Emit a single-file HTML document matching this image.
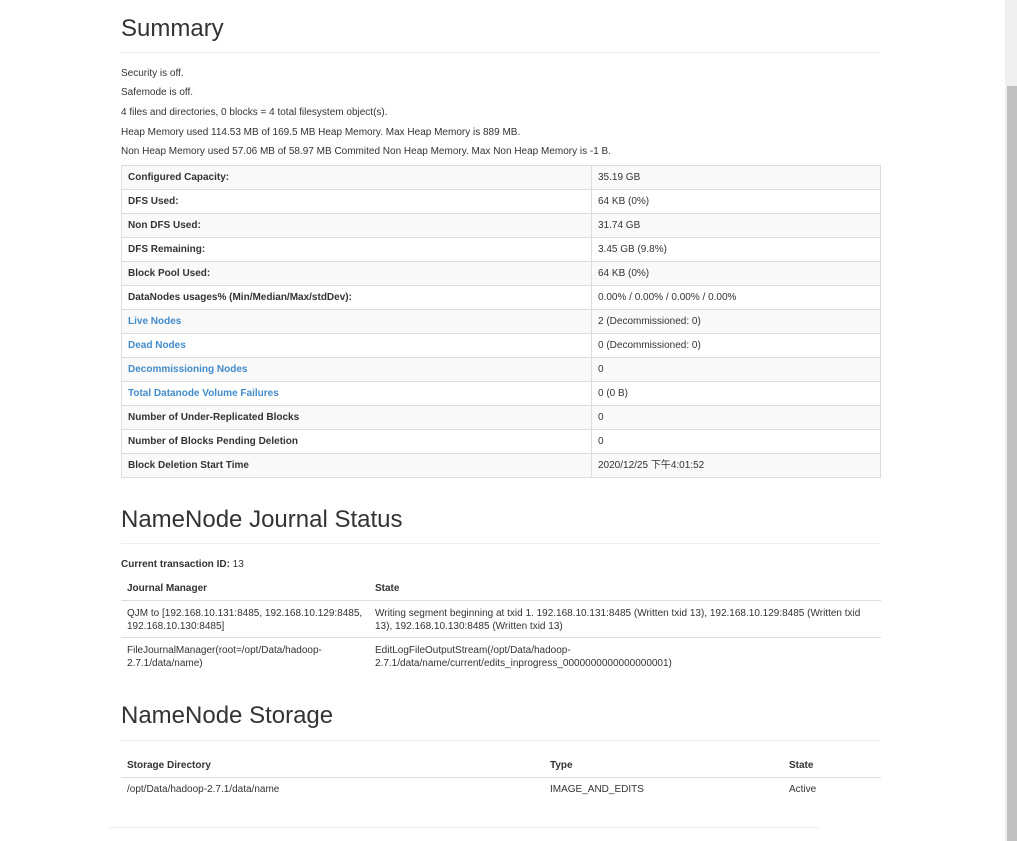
<!DOCTYPE html>
<html><head><meta charset="utf-8"><style>
*{margin:0;padding:0;box-sizing:border-box}
body{width:1017px;height:841px;overflow:hidden;background:#fff;font-family:"Liberation Sans","Noto Sans CJK SC",sans-serif;color:#333;position:relative}
.a{position:absolute;white-space:nowrap}
h1{position:absolute;left:121px;font-weight:normal;font-size:24px;color:#333;line-height:30px}
.hr{position:absolute;left:121px;width:759px;height:1px;background:#eee}
.t{font-size:10px;line-height:12px}
table.s{position:absolute;left:121px;top:165px;width:760px;border-collapse:collapse;font-size:10px;table-layout:fixed}
table.s td{border:1px solid #ddd;height:24px;padding:1px 6px 0;vertical-align:middle;line-height:12px;overflow:hidden}
table.s tr:nth-child(odd) td{background:#f9f9f9}
table.s td:first-child{font-weight:bold;width:470px}
a{color:#428bca;text-decoration:none}
.line{position:absolute;height:1px;background:#ddd}
</style></head><body>
<h1 style="top:14px">Summary</h1>
<div class="hr" style="top:52px"></div>
<div class="a t" style="left:121px;top:68px">Security is off.</div>
<div class="a t" style="left:121px;top:87px">Safemode is off.</div>
<div class="a t" style="left:121px;top:107px">4 files and directories, 0 blocks = 4 total filesystem object(s).</div>
<div class="a t" style="left:121px;top:127px">Heap Memory used 114.53 MB of 169.5 MB Heap Memory. Max Heap Memory is 889 MB.</div>
<div class="a t" style="left:121px;top:146px">Non Heap Memory used 57.06 MB of 58.97 MB Commited Non Heap Memory. Max Non Heap Memory is -1 B.</div>
<table class="s">
<tr><td>Configured Capacity:</td><td>35.19 GB</td></tr>
<tr><td>DFS Used:</td><td>64 KB (0%)</td></tr>
<tr><td>Non DFS Used:</td><td>31.74 GB</td></tr>
<tr><td>DFS Remaining:</td><td>3.45 GB (9.8%)</td></tr>
<tr><td>Block Pool Used:</td><td>64 KB (0%)</td></tr>
<tr><td>DataNodes usages% (Min/Median/Max/stdDev):</td><td>0.00% / 0.00% / 0.00% / 0.00%</td></tr>
<tr><td><a>Live Nodes</a></td><td>2 (Decommissioned: 0)</td></tr>
<tr><td><a>Dead Nodes</a></td><td>0 (Decommissioned: 0)</td></tr>
<tr><td><a>Decommissioning Nodes</a></td><td>0</td></tr>
<tr><td><a>Total Datanode Volume Failures</a></td><td>0 (0 B)</td></tr>
<tr><td>Number of Under-Replicated Blocks</td><td>0</td></tr>
<tr><td>Number of Blocks Pending Deletion</td><td>0</td></tr>
<tr><td>Block Deletion Start Time</td><td>2020/12/25 下午4:01:52</td></tr>
</table>

<h1 style="top:505px">NameNode Journal Status</h1>
<div class="hr" style="top:543px"></div>
<div class="a t" style="left:121px;top:559px"><b>Current transaction ID:</b> 13</div>
<div class="a t" style="left:127px;top:583px;font-weight:bold">Journal Manager</div>
<div class="a t" style="left:375px;top:583px;font-weight:bold">State</div>
<div class="line" style="left:121px;top:600px;width:760px"></div>
<div class="a t" style="left:127px;top:607px;line-height:13px">QJM to [192.168.10.131:8485, 192.168.10.129:8485,<br>192.168.10.130:8485]</div>
<div class="a t" style="left:375px;top:607px;line-height:13px">Writing segment beginning at txid 1. 192.168.10.131:8485 (Written txid 13), 192.168.10.129:8485 (Written txid<br>13), 192.168.10.130:8485 (Written txid 13)</div>
<div class="line" style="left:121px;top:637px;width:760px"></div>
<div class="a t" style="left:127px;top:644px;line-height:13px">FileJournalManager(root=/opt/Data/hadoop-<br>2.7.1/data/name)</div>
<div class="a t" style="left:375px;top:644px;line-height:13px">EditLogFileOutputStream(/opt/Data/hadoop-<br>2.7.1/data/name/current/edits_inprogress_0000000000000000001)</div>

<h1 style="top:701px">NameNode Storage</h1>
<div class="hr" style="top:740px"></div>
<div class="a t" style="left:127px;top:760px;font-weight:bold">Storage Directory</div>
<div class="a t" style="left:550px;top:760px;font-weight:bold">Type</div>
<div class="a t" style="left:789px;top:760px;font-weight:bold">State</div>
<div class="line" style="left:121px;top:777px;width:760px"></div>
<div class="a t" style="left:127px;top:784px">/opt/Data/hadoop-2.7.1/data/name</div>
<div class="a t" style="left:550px;top:784px">IMAGE_AND_EDITS</div>
<div class="a t" style="left:789px;top:784px">Active</div>
<div class="line" style="left:110px;top:827px;width:708px;background:#eee"></div>

<div style="position:absolute;left:1005px;top:0;width:12px;height:841px;background:#f0f0f0"></div>
<div style="position:absolute;left:1007px;top:86px;width:10px;height:755px;background:#c1c1c1"></div>
</body></html>
